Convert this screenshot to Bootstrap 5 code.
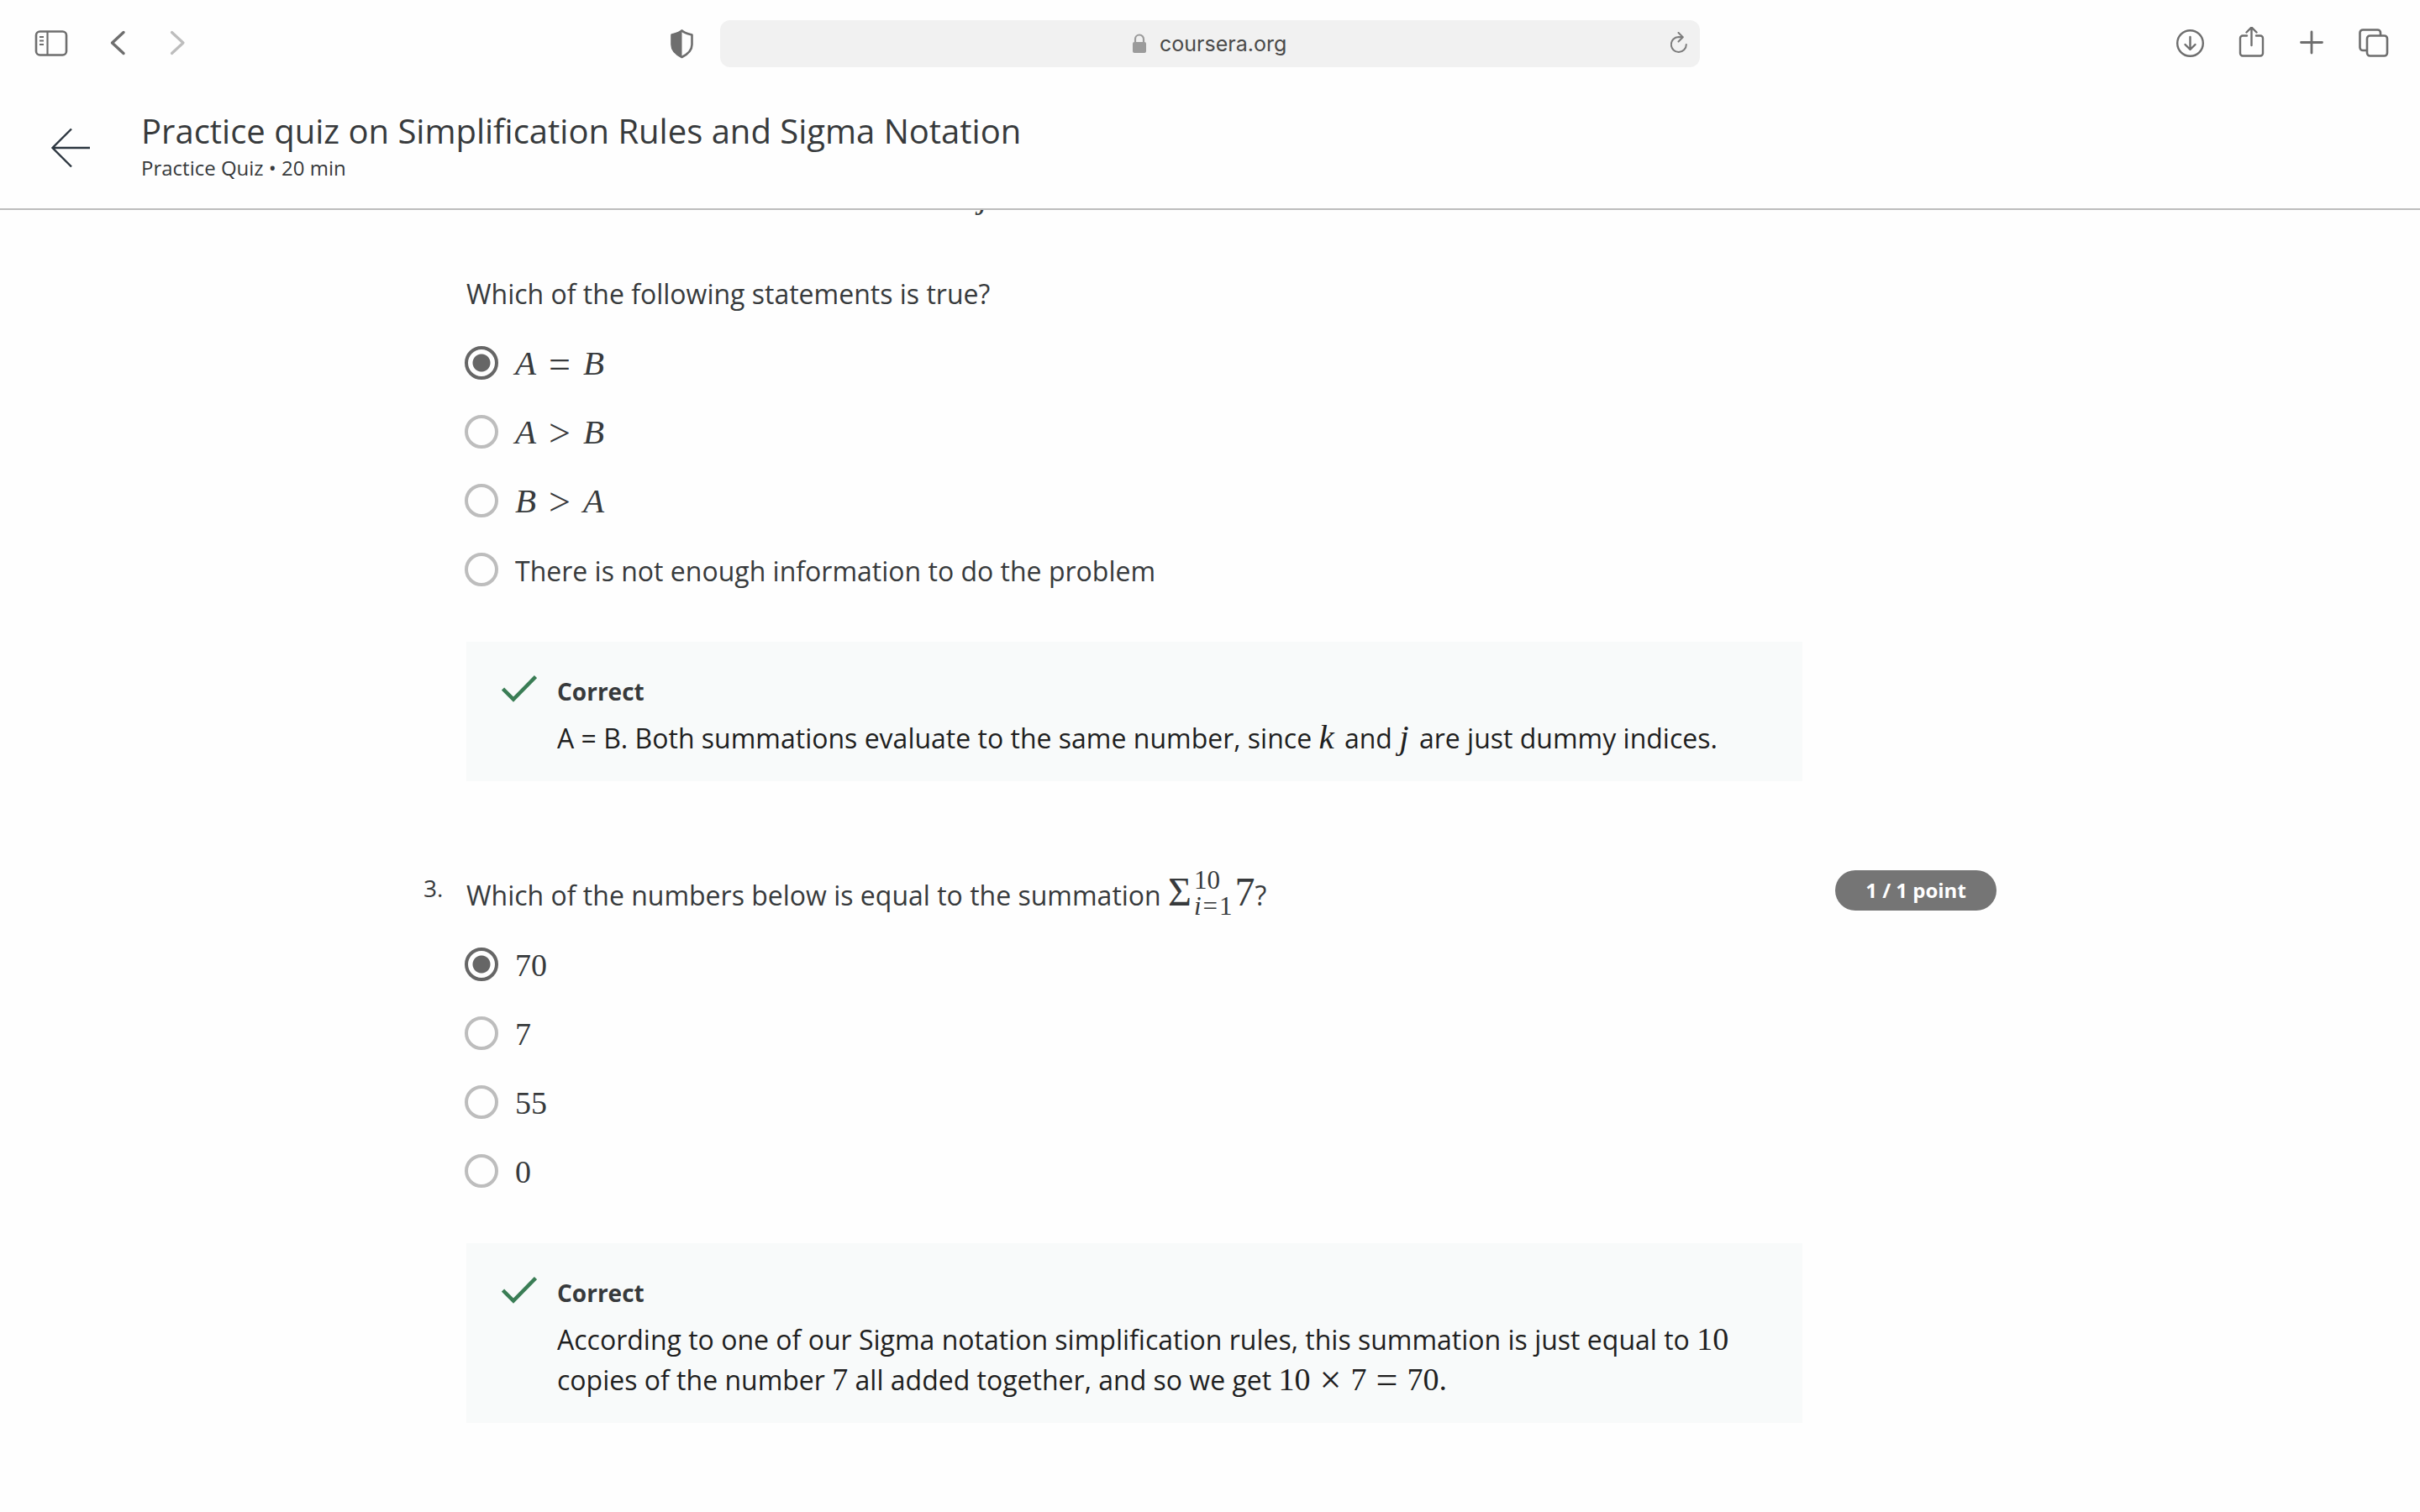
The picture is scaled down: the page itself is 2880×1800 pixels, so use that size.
<!DOCTYPE html>
<html lang="en">
<head>
<meta charset="utf-8">
<meta name="viewport" content="width=device-width, initial-scale=1">
<title>Practice quiz on Simplification Rules and Sigma Notation</title>
<link href="https://cdn.jsdelivr.net/npm/bootstrap@5.3.0/dist/css/bootstrap.min.css" rel="stylesheet">
<style>
body { font-family: "Open Sans", "Noto Sans", sans-serif; font-size: 32px; line-height: 48px; color: #373a3c; background: #fefefe; }
svg { display: block; fill: none; }

.browser-bar { height: 104px; padding: 0 35px; gap: 32px; color: #6e6e6e; }
.side { flex: 1 1 0; min-width: 0; }
.tool-group { gap: 33px; }
.tool-btn { width: 40px; height: 40px; color: inherit; }
.tool-wide { width: 48px; }
.address { width: 1166px; height: 56px; border-radius: 12px; background: #f1f1f1; padding: 0 15px; }
.address-text { width: 152px; font: 25px/40px Inter, sans-serif; color: #4a4a4a; outline: 0; }

.quiz-header { padding: 24px 60px 32px; border-bottom: 2px solid #bdbdbd; gap: 60px; }
.quiz-title { font-size: 40px; line-height: 56px; font-weight: 400; }
.quiz-meta { font-size: 24px; line-height: 32px; }

.quiz-body { max-width: 1872px; }
.cut-line { margin: -39px 0 67px; padding-left: 610px; }
.q-num { width: 51px; font-size: 28px; line-height: 42px; }
.q-score { width: 231px; }
.score-pill { width: 192px; font-size: 24px; line-height: 48px; background: #757575; }
.q-next { margin-top: 106px; }
.q-text { margin-bottom: 17px; }
.q-next .q-text { padding-top: 6px; }

.option { height: 82px; gap: 20px; margin-left: -2px; }
.option .form-check-input { width: 40px; height: 40px; margin: 0; border: 4px solid #bdbdbd; background-color: transparent; }
.option .form-check-input:checked { border-color: #666; background: radial-gradient(circle, #666 10px, transparent 11px) border-box; }
.option label { padding-top: 4px; }

.feedback { background: #f8fafa; margin-top: 45px; padding: 39px 40px 27px 42px; gap: 24px; color: #1f1f1f; }
.feedback-title { font-size: 28px; line-height: 40px; font-weight: 700; color: #373a3c; margin-bottom: 12px; }

.math { font-family: "Liberation Serif", serif; font-size: 38px; line-height: 0; white-space: nowrap; }
.math i { font-size: 41px; }
.math-letter { margin-right: 4px; }
.rel { font-size: 46px; margin: 0 11px; vertical-align: -3px; }
.option .rel { margin: 0 15px; }
.big-math { font-size: 48px; }
.limits { display: inline-flex; flex-direction: column; vertical-align: 20px; font-size: 31px; line-height: 31px; height: 0; margin: -20px 3px 0; }
.limits i { font-size: 31px; }
.limits b { font-weight: 400; margin: 0 2px; }
</style>
<script src="https://cdn.jsdelivr.net/npm/bootstrap@5.3.0/dist/js/bootstrap.bundle.min.js"></script>
</head>
<body class="vh-100 overflow-hidden d-flex flex-column">

<nav class="browser-bar d-flex align-items-center flex-shrink-0" aria-label="Browser">
  <div class="side d-flex align-items-center">
    <div class="d-flex align-items-center gap-4 flex-fill">
      <button class="btn p-0 border-0 tool-btn tool-wide me-1" aria-label="Sidebar"><svg width="48" height="40" viewBox="0 0 48 40" stroke="currentColor" stroke-width="2.6"><rect x="8" y="5.500" width="36" height="28" rx="4.500"/><path d="M21.500 5.500v28M12 12h5M12 16.500h5M12 21h5" stroke-width="2.200"/></svg></button>
      <button class="btn p-0 border-0 tool-btn ms-2" aria-label="Back"><svg width="40" height="40" viewBox="0 0 40 40" stroke="currentColor" stroke-width="3.400" stroke-linecap="round" stroke-linejoin="round"><path d="M28 6.500L14.500 19 28 31.500"/></svg></button>
      <button class="btn p-0 border-0 tool-btn ms-2" aria-label="Forward"><svg width="40" height="40" viewBox="0 0 40 40" stroke="#bdbdbd" stroke-width="3.200" stroke-linecap="round" stroke-linejoin="round"><path d="M13.500 6.500L27 19 13.500 31.500"/></svg></button>
    </div>
    <button class="btn p-0 border-0 tool-btn" aria-label="Privacy report"><svg width="40" height="40" viewBox="0 0 40 40"><path d="M26.500 4.500C23.500 7.500 18 8.500 14.500 9.500V21c0 7 5 11.500 12 15 7-3.500 12-8 12-15V9.500C35 8.500 29.500 7.500 26.500 4.500z" stroke="currentColor" stroke-width="2.600" stroke-linejoin="round"/><path d="M26.500 4.500C23.500 7.500 18 8.500 14.500 9.500V21c0 7 5 11.500 12 15z" fill="currentColor"/></svg></button>
  </div>
  <div class="address d-flex align-items-center">
    <span class="side"></span>
    <svg width="16" height="24" viewBox="0 0 16 24"><rect y="10" width="16" height="13" rx="2" fill="#9b9b9b"/><path d="M3 11V6.500a5 5 0 0 1 10 0V11" stroke="#9b9b9b" stroke-width="2.200"/></svg>
    <input class="address-text border-0 bg-transparent p-0 ms-3" type="text" value="coursera.org" aria-label="Address">
    <span class="side d-flex justify-content-end"><button class="btn p-0 border-0" aria-label="Reload"><svg width="20" height="28" viewBox="0 0 20 28" stroke="#7c7c7c" stroke-width="2" stroke-linecap="round" stroke-linejoin="round"><path d="M18.800 15A9 9 0 1 1 9.500 6c2 0 3.500 0 5 .3M9.500 1l5.300 5.200-5.300 5.300"/></svg></button></span>
  </div>
  <div class="side tool-group d-flex align-items-center justify-content-end">
    <button class="btn p-0 border-0 tool-btn" aria-label="Downloads"><svg width="40" height="40" viewBox="0 0 40 40" stroke="currentColor" stroke-width="2.400" stroke-linecap="round" stroke-linejoin="round"><circle cx="20.500" cy="19.500" r="15.300"/><path d="M20.500 12v14.500M14.500 21l6 6 6-6"/></svg></button>
    <button class="btn p-0 border-0 tool-btn" aria-label="Share"><svg width="40" height="40" viewBox="0 0 40 40" stroke="currentColor" stroke-width="2.400" stroke-linecap="round" stroke-linejoin="round"><path d="M15 10.500h-5a3 3 0 0 0-3 3V31.500a3 3 0 0 0 3 3H31a3 3 0 0 0 3-3V13.500a3 3 0 0 0-3-3H26M20.500 22V1M14.500 6.500l6-6 6 6"/></svg></button>
    <button class="btn p-0 border-0 tool-btn" aria-label="New tab"><svg width="40" height="40" viewBox="0 0 40 40" stroke="currentColor" stroke-width="2.800" stroke-linecap="round"><path d="M19 6v25M6.500 18.500h25"/></svg></button>
    <button class="btn p-0 border-0 tool-btn" aria-label="Tab overview"><svg width="40" height="40" viewBox="0 0 40 40" stroke="currentColor" stroke-width="2.600"><rect x="12" y="10.500" width="24" height="24" rx="3.500"/><path d="M12 28H7a3.500 3.500 0 0 1-3.500-3.500V7A3.500 3.500 0 0 1 7 3.500H24.500A3.500 3.500 0 0 1 28 7v3.500"/></svg></button>
  </div>
</nav>

<header class="quiz-header d-flex align-items-center flex-shrink-0">
  <a href="#" class="pt-2" aria-label="Back to course"><svg width="48" height="48" viewBox="0 0 48 48" stroke="#2c3640" stroke-width="2.400"><path d="M47 24H2.500M25 1.500L2.500 24 25 46.500"/></svg></a>
  <div>
    <h1 class="quiz-title mb-0">Practice quiz on Simplification Rules and Sigma Notation</h1>
    <p class="quiz-meta mb-0">Practice Quiz • 20 min</p>
  </div>
</header>

<main class="flex-fill overflow-hidden">
  <div class="quiz-body mx-auto">
    <section class="d-flex">
      <div class="q-num flex-shrink-0"></div>
      <div class="flex-fill">
        <p class="cut-line"><span class="math"><i>j</i></span></p>
        <p class="q-text">Which of the following statements is true?</p>
        <div class="option d-flex align-items-center"><input class="form-check-input" type="radio" name="q2" id="q2a" checked><label for="q2a"><span class="math"><i>A</i><span class="rel">=</span><i>B</i></span></label></div>
        <div class="option d-flex align-items-center"><input class="form-check-input" type="radio" name="q2" id="q2b"><label for="q2b"><span class="math"><i>A</i><span class="rel">&gt;</span><i>B</i></span></label></div>
        <div class="option d-flex align-items-center"><input class="form-check-input" type="radio" name="q2" id="q2c"><label for="q2c"><span class="math"><i>B</i><span class="rel">&gt;</span><i>A</i></span></label></div>
        <div class="option d-flex align-items-center"><input class="form-check-input" type="radio" name="q2" id="q2d"><label for="q2d">There is not enough information to do the problem</label></div>
        <div class="feedback d-flex">
          <svg class="flex-shrink-0" width="42" height="34" viewBox="0 0 42 34" stroke="#3a7d55" stroke-width="4.500"><path d="M1.500 17L14 29.500 40.500 2.500"/></svg>
          <div>
            <h2 class="feedback-title">Correct</h2>
            <p class="mb-0">A = B. Both summations evaluate to the same number, since <span class="math math-letter"><i>k</i></span> and <span class="math math-letter"><i>j</i></span> are just dummy indices.</p>
          </div>
        </div>
      </div>
      <div class="q-score flex-shrink-0"></div>
    </section>

    <section class="q-next d-flex">
      <div class="q-num flex-shrink-0">3.</div>
      <div class="flex-fill">
        <p class="q-text">Which of the numbers below is equal to the summation <span class="math big-math">Σ<span class="limits"><span>10</span><span><i>i</i><b>=</b>1</span></span>7</span>?</p>
        <div class="option d-flex align-items-center"><input class="form-check-input" type="radio" name="q3" id="q3a" checked><label for="q3a"><span class="math">70</span></label></div>
        <div class="option d-flex align-items-center"><input class="form-check-input" type="radio" name="q3" id="q3b"><label for="q3b"><span class="math">7</span></label></div>
        <div class="option d-flex align-items-center"><input class="form-check-input" type="radio" name="q3" id="q3c"><label for="q3c"><span class="math">55</span></label></div>
        <div class="option d-flex align-items-center"><input class="form-check-input" type="radio" name="q3" id="q3d"><label for="q3d"><span class="math">0</span></label></div>
        <div class="feedback d-flex">
          <svg class="flex-shrink-0" width="42" height="34" viewBox="0 0 42 34" stroke="#3a7d55" stroke-width="4.500"><path d="M1.500 17L14 29.500 40.500 2.500"/></svg>
          <div>
            <h2 class="feedback-title">Correct</h2>
            <p class="mb-0">According to one of our Sigma notation simplification rules, this summation is just equal to <span class="math">10</span> copies of the number <span class="math">7</span> all added together, and so we get <span class="math">10<span class="rel">×</span>7<span class="rel">=</span>70.</span></p>
          </div>
        </div>
      </div>
      <div class="q-score flex-shrink-0 d-flex justify-content-end align-items-start"><span class="score-pill badge rounded-pill p-0">1 / 1 point</span></div>
    </section>
  </div>
</main>
</body>
</html>
